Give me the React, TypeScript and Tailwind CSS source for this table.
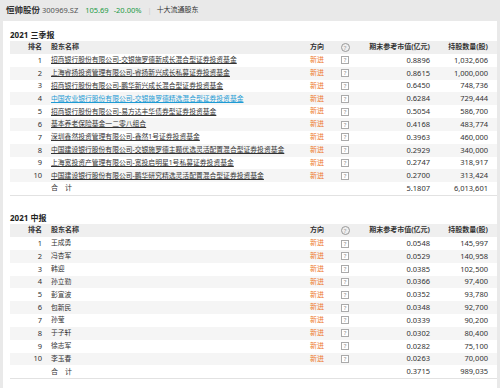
import React from "react";

type Row = { rank: string; name: string; val: string; qty: string; link?: boolean };

const s1: Row[] = [
  { rank: "1", name: "招商银行股份有限公司-交银施罗德新成长混合型证券投资基金", val: "0.8896", qty: "1,032,606" },
  { rank: "2", name: "上海睿扬投资管理有限公司-睿扬新兴成长私募证券投资基金", val: "0.8615", qty: "1,000,000" },
  { rank: "3", name: "招商银行股份有限公司-鹏华新兴成长混合型证券投资基金", val: "0.6450", qty: "748,736" },
  { rank: "4", name: "中国农业银行股份有限公司-交银施罗德精选混合型证券投资基金", val: "0.6284", qty: "729,444", link: true },
  { rank: "5", name: "招商银行股份有限公司-易方达丰华债券型证券投资基金", val: "0.5054", qty: "586,700" },
  { rank: "6", name: "基本养老保险基金一二零八组合", val: "0.4168", qty: "483,774" },
  { rank: "7", name: "深圳鑫然投资管理有限公司-鑫然1号证券投资基金", val: "0.3963", qty: "460,000" },
  { rank: "8", name: "中国建设银行股份有限公司-交银施罗德主题优选灵活配置混合型证券投资基金", val: "0.2929", qty: "340,000" },
  { rank: "9", name: "上海宽投资产管理有限公司-宽投启明星1号私募证券投资基金", val: "0.2747", qty: "318,917" },
  { rank: "10", name: "中国建设银行股份有限公司-鹏华研究精选灵活配置混合型证券投资基金", val: "0.2700", qty: "313,424" },
];

const s2: Row[] = [
  { rank: "1", name: "王成勇", val: "0.0548", qty: "145,997" },
  { rank: "2", name: "冯杏军", val: "0.0529", qty: "140,958" },
  { rank: "3", name: "韩迎", val: "0.0385", qty: "102,500" },
  { rank: "4", name: "孙立勤", val: "0.0366", qty: "97,400" },
  { rank: "5", name: "彭宣波", val: "0.0352", qty: "93,780" },
  { rank: "6", name: "包新民", val: "0.0348", qty: "92,700" },
  { rank: "7", name: "孙莹", val: "0.0339", qty: "90,200" },
  { rank: "8", name: "于子轩", val: "0.0302", qty: "80,400" },
  { rank: "9", name: "徐志军", val: "0.0282", qty: "75,100" },
  { rank: "10", name: "李玉春", val: "0.0263", qty: "70,000" },
];

function Section({ title, rows, total, underline }: { title: string; rows: Row[]; total: [string, string]; underline: boolean }) {
  return (
    <div>
      <div className="h-[13px] flex items-center text-[8px] font-bold text-[#222] pl-[7px]">{title}</div>
      <div className="ml-[7px]">
        <div className="h-[13px] flex items-center bg-[#efefef] text-[7px] font-bold text-[#333]">
          <div className="w-[32px] text-right">排名</div>
          <div className="ml-[9px] flex-1">股东名称</div>
          <div className="w-[26px]">方向</div>
          <div className="w-[18px] flex justify-center">
            <span className="w-[9px] h-[9px] rounded-full border border-[#999] text-[#999] text-[6px] font-normal flex items-center justify-center leading-none">?</span>
          </div>
          <div className="w-[76px] text-right">期末参考市值(亿元)</div>
          <div className="w-[58px] text-right">持股数量(股)</div>
          <div className="w-[9px]" />
        </div>
        {rows.map((r, i) => (
          <div key={r.rank} className={`h-[12.83px] flex items-center text-[#333] ${i % 2 === 1 ? "bg-[#f5f5f5]" : "bg-white"}`}>
            <div className="w-[32px] text-right text-[7.5px]">{r.rank}</div>
            <div className={`ml-[9px] flex-1 whitespace-nowrap text-[6.8px] ${underline ? "underline underline-offset-1" : ""} ${r.link ? "text-[#1e9bd4]" : ""}`}>{r.name}</div>
            <div className="w-[26px] text-[7px] text-[#ee7a30]">新进</div>
            <div className="w-[18px] flex justify-center">
              <span className="w-[8px] h-[8px] border border-[#aaa] text-[#888] text-[6px] flex items-center justify-center leading-none bg-white">?</span>
            </div>
            <div className="w-[76px] text-right text-[7.5px]">{r.val}</div>
            <div className="w-[58px] text-right text-[7.5px]">{r.qty}</div>
            <div className="w-[9px]" />
          </div>
        ))}
        <div className="h-[12.83px] flex items-center text-[#333] border-b border-[#e2e2e2] box-content">
          <div className="w-[32px]" />
          <div className="ml-[9px] flex-1 text-[7px]">合　计</div>
          <div className="w-[26px]" />
          <div className="w-[18px]" />
          <div className="w-[76px] text-right text-[7.5px]">{total[0]}</div>
          <div className="w-[58px] text-right text-[7.5px]">{total[1]}</div>
          <div className="w-[9px]" />
        </div>
      </div>
    </div>
  );
}

export default function App() {
  return (
    <div className="w-[500px] h-[388px] overflow-hidden bg-[#e9e9e9]" style={{ fontFamily: '"Noto Sans", "Noto Sans CJK SC", sans-serif' }}>
      <div className="h-[21px] flex items-center pl-[6px] text-[7.5px] whitespace-nowrap">
        <span className="text-[8.5px] font-bold text-[#333]">恒帅股份</span>
        <span className="ml-[2px] text-[#555]">300969.SZ</span>
        <span className="ml-[7px] text-[#1a9a45]">105.69</span>
        <span className="ml-[5px] text-[#1a9a45]">-20.00%</span>
        <span className="ml-[6px] text-[#ccc]">|</span>
        <span className="ml-[5px] text-[7px] text-[#333]">十大流通股东</span>
      </div>
      <div className="ml-[3px] mr-[3px] bg-white h-[367px] pt-[7px]">
        <Section title="2021 三季报" rows={s1} total={["5.1807", "6,013,601"]} underline={true} />
        <div className="h-[15px]" />
        <Section title="2021 中报" rows={s2} total={["0.3715", "989,035"]} underline={false} />
      </div>
    </div>
  );
}
